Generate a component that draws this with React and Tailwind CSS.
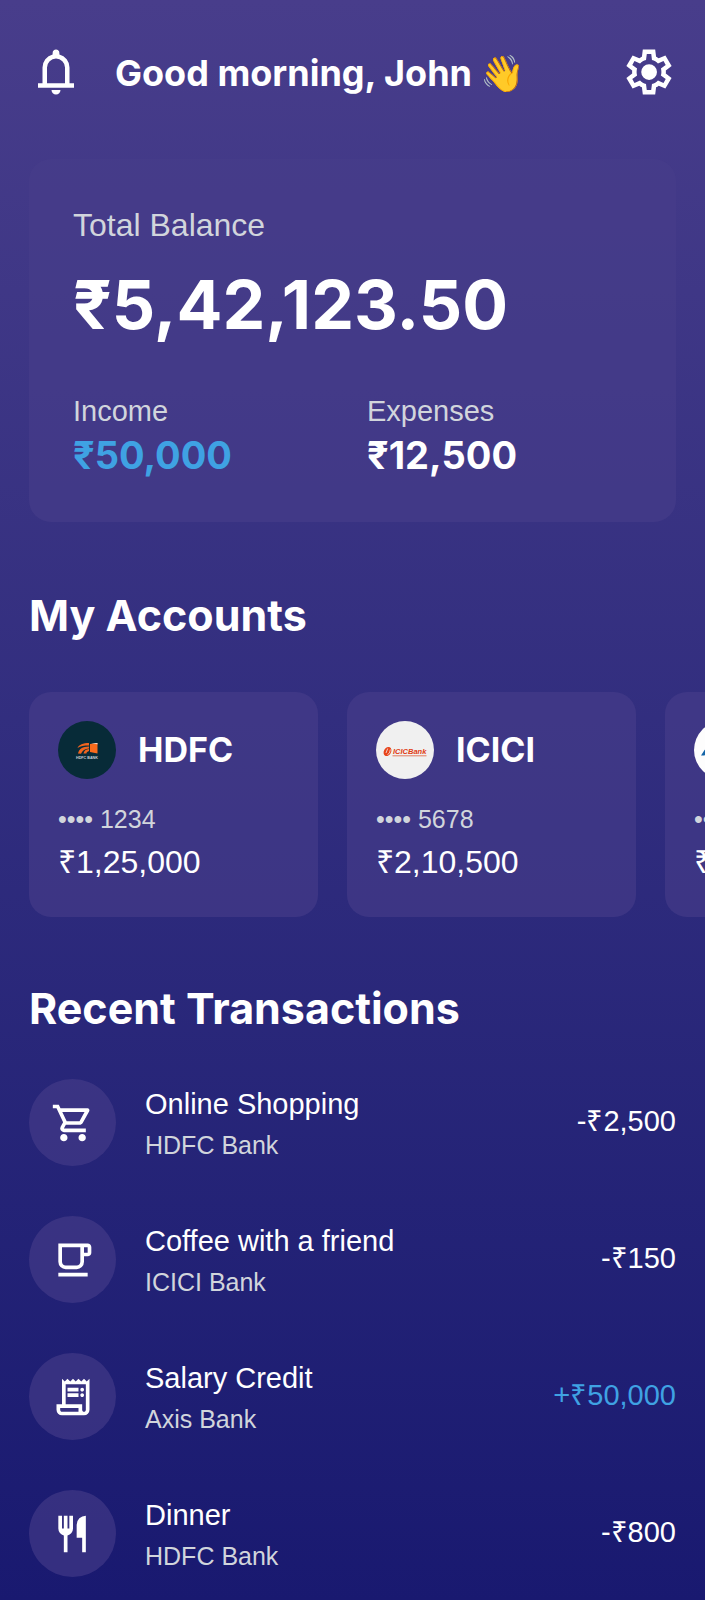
import React from "react";

function SymbolIcon({ d, className }) {
  return (
    <svg viewBox="0 -960 960 960" fill="currentColor" className={className} aria-hidden="true">
      <path d={d} />
    </svg>
  );
}

const ICONS = {
  bell: "M160-200v-80h80v-280q0-83 50-147.5T420-792v-28q0-25 17.5-42.5T480-880q25 0 42.5 17.5T540-820v28q80 20 130 84.5T720-560v280h80v80H160Zm320-300Zm0 420q-33 0-56.5-23.5T400-160h160q0 33-23.5 56.5T480-80ZM320-280h320v-280q0-66-47-113t-113-47q-66 0-113 47t-47 113v280Z",
  settings:
    "m370-80-16-128q-13-5-24.5-12T307-235l-119 50L78-375l103-78q-1-7-1-13.5v-27q0-6.5 1-13.5L78-585l110-190 119 50q11-8 23-15t24-12l16-128h220l16 128q13 5 24.5 12t22.5 15l119-50 110 190-103 78q1 7 1 13.5v27q0 6.5-2 13.5l103 78-110 190-118-50q-11 8-23 15t-24 12L590-80H370Zm70-80h79l14-106q31-8 57.5-23.5T639-327l99 41 39-68-86-65q5-14 7-29.5t2-31.5q0-16-2-31.5t-7-29.5l86-65-39-68-99 42q-22-23-48.5-38.5T533-694l-13-106h-79l-14 106q-31 8-57.5 23.5T321-633l-99-41-39 68 86 64q-5 15-7 30t-2 32q0 16 2 31t7 30l-86 65 39 68 99-42q22 23 48.5 38.5T427-266l13 106Zm42-180q58 0 99-41t41-99q0-58-41-99t-99-41q-59 0-99.5 41T342-480q0 58 40.5 99t99.5 41Z",
  cart: "M280-80q-33 0-56.5-23.5T200-160q0-33 23.5-56.5T280-240q33 0 56.5 23.5T360-160q0 33-23.5 56.5T280-80Zm400 0q-33 0-56.5-23.5T600-160q0-33 23.5-56.5T680-240q33 0 56.5 23.5T760-160q0 33-23.5 56.5T680-80ZM246-720l96 200h280l110-200H246Zm-38-80h590q23 0 35 20.5t1 41.5L692-482q-11 20-29.5 31T622-440H324l-44 80h480v80H280q-45 0-68-39.5t-2-78.5l54-98-144-304H40v-80h130l38 80Z",
  cafe: "M160-120v-80h640v80H160Zm160-160q-66 0-113-47t-47-113v-400h640q33 0 56.5 23.5T880-760v120q0 33-23.5 56.5T800-560h-80v120q0 66-47 113t-113 47H320Zm0-80h240q33 0 56.5-23.5T640-440v-320H240v320q0 33 23.5 56.5T320-360Zm400-280h80v-120h-80v120Z",
  receipt:
    "M240-80q-50 0-85-35t-35-85v-120h120v-560l60 60 60-60 60 60 60-60 60 60 60-60 60 60 60-60 60 60 60-60v680q0 50-35 85t-85 35H240Zm480-80q17 0 28.5-11.5T760-200v-560H320v440h360v120q0 17 11.5 28.5T720-160ZM360-600v-80h240v80H360Zm0 120v-80h240v80H360Zm320-120q-17 0-28.5-11.5T640-640q0-17 11.5-28.5T680-680q17 0 28.5 11.5T720-640q0 17-11.5 28.5T680-600Zm0 120q-17 0-28.5-11.5T640-520q0-17 11.5-28.5T680-560q17 0 28.5 11.5T720-520q0 17-11.5 28.5T680-480ZM240-160h360v-80H200v40q0 17 11.5 28.5T240-160Z",
  restaurant:
    "M280-80v-366q-51-14-85.5-56T160-600v-280h80v280h40v-280h80v280h40v-280h80v280q0 56-34.5 98T360-446v366h-80Zm400 0v-320H560v-280q0-83 58.5-141.5T760-880v800h-80Z",
};

function HdfcLogo() {
  return (
    <svg viewBox="0 0 58 58" className="size-[58px] shrink-0 rounded-full" role="img" aria-label="HDFC Bank">
      <rect width="58" height="58" fill="#072b38" />
      <path d="M19.500 27C21 23.500 25 22 31 22v2.600c-5 0-8.500.4-11.500 2.400Z" fill="#f0641e" />
      <path d="M20 32.500c1-4.700 4.500-6.900 11-7.100v2c-4 .4-6.800 2-8 5.400Z" fill="#f0641e" />
      <path d="M25.500 32.500c.6-2.700 2.300-4 5.500-4.400v1.900c-1.600.4-2.300 1.200-2.600 2.500Z" fill="#f0641e" />
      <path d="m32 23 7.500-1v10.500L32 31Z" fill="#fa6b1c" />
      <path d="M33 22.300h6.500v.9Z" fill="#fff" />
      <text x="29" y="38" textAnchor="middle" fontSize="3.700" fontWeight="700" fill="#c9d0d4" fontFamily="Liberation Sans, sans-serif">
        HDFC BANK
      </text>
    </svg>
  );
}

function IciciLogo() {
  return (
    <svg viewBox="0 0 58 58" className="size-[58px] shrink-0 rounded-full" role="img" aria-label="ICICI Bank">
      <rect width="58" height="58" fill="#f0f0f0" />
      <ellipse cx="11.500" cy="30.500" rx="3.600" ry="4.800" transform="rotate(30 11.500 30.500)" fill="#e8431a" />
      <path d="m10 32 1.700-4.500M11.500 33.500l2-1.500.8-3.500" stroke="#f0f0f0" strokeWidth="0.800" fill="none" />
      <text x="17" y="33" fontSize="7.500" fontWeight="700" fontStyle="italic" fill="#e03c12" fontFamily="Liberation Sans, sans-serif">
        ICICBank
      </text>
      <path d="M16.500 34.800h34" stroke="#e0603c" strokeWidth="0.800" />
    </svg>
  );
}

function AxisLogo() {
  return (
    <svg viewBox="0 0 58 58" className="size-[58px] shrink-0 rounded-full" role="img" aria-label="Axis Bank">
      <rect width="58" height="58" fill="#fdfdfd" />
      <path d="m7 34.500 3.700-5.700h4l2.800 5.700h-4l-1.300-2.600-1.700 2.600Z" fill="#1465a8" />
      <text x="19" y="34.500" fontSize="6" fontWeight="700" fill="#1465a8" fontFamily="Liberation Sans, sans-serif">
        AXIS BANK
      </text>
    </svg>
  );
}

const ACCOUNTS = [
  { name: "HDFC", digits: "1234", balance: "₹1,25,000", Logo: HdfcLogo },
  { name: "ICICI", digits: "5678", balance: "₹2,10,500", Logo: IciciLogo },
  { name: "Axis", digits: "9012", balance: "₹2,06,623", Logo: AxisLogo },
];

const TRANSACTIONS = [
  { title: "Online Shopping", bank: "HDFC Bank", amount: "-₹2,500", icon: ICONS.cart },
  { title: "Coffee with a friend", bank: "ICICI Bank", amount: "-₹150", icon: ICONS.cafe },
  { title: "Salary Credit", bank: "Axis Bank", amount: "+₹50,000", icon: ICONS.receipt, credit: true },
  { title: "Dinner", bank: "HDFC Bank", amount: "-₹800", icon: ICONS.restaurant },
];

function AccountCard({ name, digits, balance, Logo }) {
  return (
    <li className="w-[289px] shrink-0 rounded-[22px] bg-[#483d8b]/60 p-[29px]">
      <div className="flex items-center gap-[22px]">
        <Logo />
        <h3 className="font-['Inter',sans-serif] text-[34px] leading-[44px] font-bold">{name}</h3>
      </div>
      <p className="mt-[22px] text-[25px] leading-[36px] text-gray-300">•••• {digits}</p>
      <p className="text-[32px] leading-[51px]">{balance}</p>
    </li>
  );
}

function TransactionRow({ title, bank, amount, icon, credit }) {
  return (
    <li className="flex items-center gap-[29px]">
      <span className="flex size-[87px] shrink-0 items-center justify-center rounded-full bg-[#483d8b]/60">
        <SymbolIcon d={icon} className="size-11" />
      </span>
      <div className="min-w-0 grow">
        <p className="text-[29px] leading-[44px]">{title}</p>
        <p className="text-[25px] leading-[38px] text-gray-300">{bank}</p>
      </div>
      <p className={credit ? "pb-[3px] text-[29px] leading-[44px] text-[#3fa2e3]" : "pb-[3px] text-[29px] leading-[44px]"}>
        {amount}
      </p>
    </li>
  );
}

export default function App() {
  return (
    <main className="min-h-screen overflow-hidden bg-linear-to-b from-[#483d8b] to-[#191970] px-[29px] pt-[45px] pb-[22px] font-['Liberation_Sans',Arial,sans-serif] text-white">
      <header className="flex items-center justify-between">
        <div className="flex items-center gap-8">
          <button type="button" aria-label="Notifications">
            <SymbolIcon d={ICONS.bell} className="size-[54px]" />
          </button>
          <h1 className="pt-[3px] font-['Inter','Noto_Color_Emoji',sans-serif] text-[36px] leading-[51px] font-bold">
            Good morning, John 👋
          </h1>
        </div>
        <button type="button" aria-label="Settings">
          <SymbolIcon d={ICONS.settings} className="size-[54px]" />
        </button>
      </header>

      <section className="mt-[60px] rounded-[22px] bg-[#483d8b]/60 p-[44px]">
        <p className="text-[32px] leading-[44px] text-gray-300">Total Balance</p>
        <p className="mt-3 font-['Inter',sans-serif] text-[68px] leading-[90px] font-bold">₹5,42,123.50</p>
        <dl className="mt-[40px] grid grid-cols-2 gap-[29px]">
          <div>
            <dt className="text-[29px] leading-[44px] text-gray-300">Income</dt>
            <dd className="font-['Inter',sans-serif] text-[38px] leading-[45px] font-bold text-[#3fa2e3]">₹50,000</dd>
          </div>
          <div>
            <dt className="text-[29px] leading-[44px] text-gray-300">Expenses</dt>
            <dd className="font-['Inter',sans-serif] text-[38px] leading-[45px] font-bold">₹12,500</dd>
          </div>
        </dl>
      </section>

      <section className="mt-[64px]">
        <h2 className="font-['Inter',sans-serif] text-[43px] leading-[58px] font-bold">My Accounts</h2>
        <ul className="-mx-[29px] mt-[48px] flex gap-[29px] overflow-x-auto px-[29px] [scrollbar-width:none]">
          {ACCOUNTS.map((account) => (
            <AccountCard key={account.name} {...account} />
          ))}
        </ul>
      </section>

      <section className="mt-[62px]">
        <h2 className="font-['Inter',sans-serif] text-[43px] leading-[58px] font-bold">Recent Transactions</h2>
        <ul className="mt-[42px] flex flex-col gap-[50px]">
          {TRANSACTIONS.map((transaction) => (
            <TransactionRow key={transaction.title} {...transaction} />
          ))}
        </ul>
      </section>
    </main>
  );
}
